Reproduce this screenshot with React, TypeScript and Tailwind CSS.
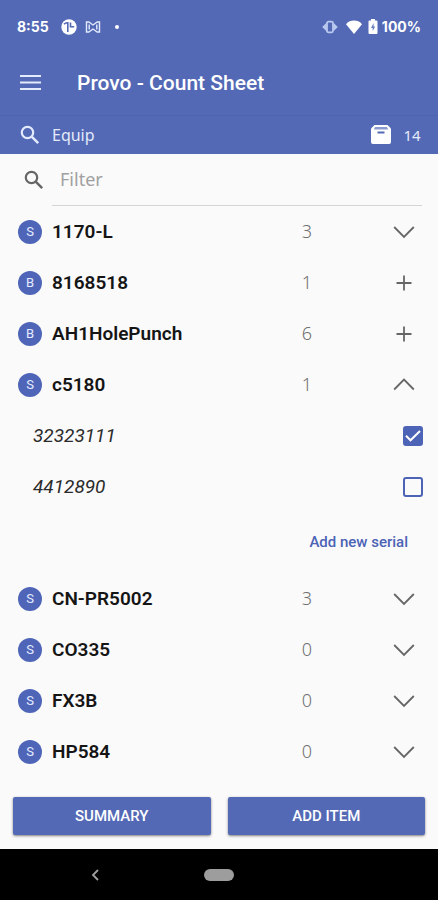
import { useState } from "react";

type Item = {
  name: string;
  kind: "S" | "B";
  count: number;
  serials?: { id: string; counted: boolean }[];
};

const items: Item[] = [
  { name: "1170-L", kind: "S", count: 3 },
  { name: "8168518", kind: "B", count: 1 },
  { name: "AH1HolePunch", kind: "B", count: 6 },
  {
    name: "c5180",
    kind: "S",
    count: 1,
    serials: [
      { id: "32323111", counted: true },
      { id: "4412890", counted: false },
    ],
  },
  { name: "CN-PR5002", kind: "S", count: 3 },
  { name: "CO335", kind: "S", count: 0 },
  { name: "FX3B", kind: "S", count: 0 },
  { name: "HP584", kind: "S", count: 0 },
];

function StatusBar() {
  return (
    <div className="flex h-[53px] items-center justify-between px-[17px] font-[Inter,sans-serif] text-[14px] font-bold">
      <div className="flex items-center">
        <span className="w-11">8:55</span>
        <svg viewBox="0 0 16 16" className="h-4 w-4">
          <circle cx="8" cy="8" r="7.7" fill="white" />
          <path
            d="M3 5.200Q4.500 3.600 6.800 3.800V13M9.500 3.600v4.200h3.700"
            fill="none"
            stroke="#5369b5"
            strokeWidth="1.6"
          />
        </svg>
        <svg
          viewBox="0 0 16 14"
          className="ml-2 h-3.5 w-4"
          fill="none"
          stroke="#e3eafc"
          strokeWidth="1.4"
        >
          <path d="M1.500 2h2.300L8 5l4.200-3h2.300v10h-2.300L8 9l-4.200 3H1.500zM4.200 4.500v5M11.800 4.500v5" />
        </svg>
        <span className="ml-3.5 h-1 w-1 rounded-full bg-white" />
      </div>
      <div className="flex items-center">
        <svg viewBox="0 0 16 14" className="h-3.5 w-4" fill="#bac9f0">
          <path d="M4.500 2.800v8.400L.2 7zM11.500 2.800v8.400L15.800 7z" />
          <rect
            x="5"
            y="1.7"
            width="6"
            height="10.6"
            rx="1.5"
            fill="#5369b5"
            stroke="#bac9f0"
            strokeWidth="1.8"
          />
        </svg>
        <svg viewBox="0 0 16 14" className="ml-2 h-3.5 w-4" fill="white">
          <path d="M8 14 0 4.200C2 1.500 5 .5 8 .5s6 1 8 3.700z" />
        </svg>
        <svg viewBox="0 0 10 15" className="ml-1.5 h-[15px] w-2.5" fill="white">
          <path d="M3 0h4v1.500h1.500q1 0 1 1V14q0 1-1 1h-7q-1 0-1-1V2.500q0-1 1-1H3z" />
          <path d="M5.600 4 3 9h1.700v3l2.500-4.500H5.600z" fill="#6c7fc0" />
        </svg>
        <span className="ml-1">100%</span>
      </div>
    </div>
  );
}

function SearchIcon() {
  return (
    <svg
      viewBox="0 0 24 24"
      className="h-6 w-6"
      fill="none"
      stroke="currentColor"
      strokeWidth="2.2"
    >
      <circle cx="9.5" cy="9.5" r="5.7" />
      <path d="M13.700 13.700l6.500 6.500" strokeWidth="2.5" />
    </svg>
  );
}

function RowIcon({ item }: { item: Item }) {
  let d = "M1.200 6l9.800 10L20.800 6";
  if (item.kind === "B") d = "M11 3.500v15M3.500 11h15";
  else if (item.serials) d = "M1.200 15.500L11 5.500l9.800 10";
  return (
    <svg
      viewBox="0 0 22 22"
      className="h-[22px] w-[22px]"
      fill="none"
      stroke="#666666"
      strokeWidth="1.8"
    >
      <path d={d} />
    </svg>
  );
}

function SerialRow({ id, counted }: { id: string; counted: boolean }) {
  const [checked, setChecked] = useState(counted);

  return (
    <label className="flex h-[51px] items-center justify-between pr-[15px] pl-[33px]">
      <span className="pt-0.5 text-[19px] text-[#2b2b2b] italic">{id}</span>
      <span className="grid h-5 w-5 place-items-center">
        <input
          type="checkbox"
          checked={checked}
          onChange={() => setChecked(!checked)}
          className="col-start-1 row-start-1 h-5 w-5 appearance-none rounded-[3px] border-2 border-[#4c63b6] checked:bg-[#4c63b6]"
        />
        {checked && (
          <svg
            viewBox="0 0 20 20"
            className="pointer-events-none col-start-1 row-start-1 h-5 w-5"
            fill="none"
            stroke="white"
            strokeWidth="2"
          >
            <path d="M3 9.800l4.500 4.500L17 5" />
          </svg>
        )}
      </span>
    </label>
  );
}

function ItemRow({ item }: { item: Item }) {
  return (
    <li>
      <div className="flex h-[51px] items-center pr-4 pl-[18px]">
        <span className="flex h-6 w-6 items-center justify-center rounded-full bg-[#4f66b8] text-[13px] text-[#e6ecff]">
          {item.kind}
        </span>
        <span className="ml-2.5 flex-1 pt-0.5 text-[19px] font-semibold text-[#151515]">
          {item.name}
        </span>
        <span className="mr-[31px] w-24 text-center font-['Noto_Sans',sans-serif] text-[18px] font-light text-[#707070]">
          {item.count}
        </span>
        <button
          className="flex h-9 w-9 items-center justify-center"
          aria-label={
            item.kind === "B" ? `Add ${item.name}` : `Toggle ${item.name}`
          }
        >
          <RowIcon item={item} />
        </button>
      </div>
      {item.serials && (
        <>
          {item.serials.map((serial) => (
            <SerialRow key={serial.id} {...serial} />
          ))}
          <div className="flex h-[61px] items-center justify-end pr-[30px]">
            <button className="text-[15px] font-medium text-[#4c63b6]">
              Add new serial
            </button>
          </div>
        </>
      )}
    </li>
  );
}

export default function App() {
  const [filter, setFilter] = useState("");

  return (
    <div className="flex min-h-screen flex-col bg-[#fafafa] font-[Roboto,sans-serif]">
      <header className="bg-[#5369b5] text-white">
        <StatusBar />
        <div className="flex h-[62px] items-center px-[18px]">
          <button aria-label="Menu">
            <svg
              viewBox="0 0 24 24"
              className="h-6 w-6"
              stroke="#e3eafc"
              strokeWidth="2.2"
            >
              <path d="M2 4h21M2 10.500h21M2 17h21" />
            </svg>
          </button>
          <h1 className="ml-[35px] text-[21px] font-medium">
            Provo - Count Sheet
          </h1>
        </div>
        <div className="flex h-[39px] items-center border-t border-[#4e64b0] pr-4 pl-[18px] font-['Noto_Sans',sans-serif] text-[#e3eafc]">
          <SearchIcon />
          <span className="ml-2.5 flex-1 text-[16px]">Equip</span>
          <svg viewBox="0 0 22 22" className="h-[22px] w-[22px]">
            <path
              d="M4.500 1h13L21 4.500V18q0 2-2 2H3q-2 0-2-2V4.500z"
              fill="white"
            />
            <path d="M5 3h12l1.200 2.500H3.800z" fill="#8b9bd0" />
            <path d="M7.500 7.500h7v2h-7z" fill="#5369b5" />
          </svg>
          <span className="ml-2.5 w-5 text-center text-[15px]">14</span>
        </div>
      </header>

      <main className="flex-1">
        <div className="flex h-[52px] pr-4 pl-[22px]">
          <span className="mt-3.5 text-[#666666]">
            <SearchIcon />
          </span>
          <input
            type="text"
            value={filter}
            onChange={(e) => setFilter(e.target.value)}
            placeholder="Filter"
            aria-label="Filter"
            className="ml-1.5 min-w-0 flex-1 border-b border-[#d5d5d5] px-2 font-['Noto_Sans',sans-serif] text-[18px] outline-none placeholder:text-[#a0a0a0]"
          />
        </div>
        <ul>
          {items.map((item) => (
            <ItemRow key={item.name} item={item} />
          ))}
        </ul>
      </main>

      <div className="flex gap-[17px] px-[13px] pt-5 pb-3.5">
        <button className="h-[38px] flex-1 rounded-[2px] bg-[#5369b5] text-[15px] font-medium text-white shadow-sm shadow-black/40">
          SUMMARY
        </button>
        <button className="h-[38px] flex-1 rounded-[2px] bg-[#5369b5] text-[15px] font-medium text-white shadow-sm shadow-black/40">
          ADD ITEM
        </button>
      </div>

      <nav className="grid h-[51px] grid-cols-3 items-center bg-black">
        <button className="ml-[90px] justify-self-start" aria-label="Back">
          <svg
            viewBox="0 0 10 12"
            className="h-3 w-2.5"
            fill="none"
            stroke="#a0a0a0"
            strokeWidth="1.8"
          >
            <path d="M8 1L3 6l5 5" />
          </svg>
        </button>
        <button
          className="h-3 w-[30px] justify-self-center rounded-full bg-[#9d9d9d]"
          aria-label="Home"
        />
      </nav>
    </div>
  );
}
